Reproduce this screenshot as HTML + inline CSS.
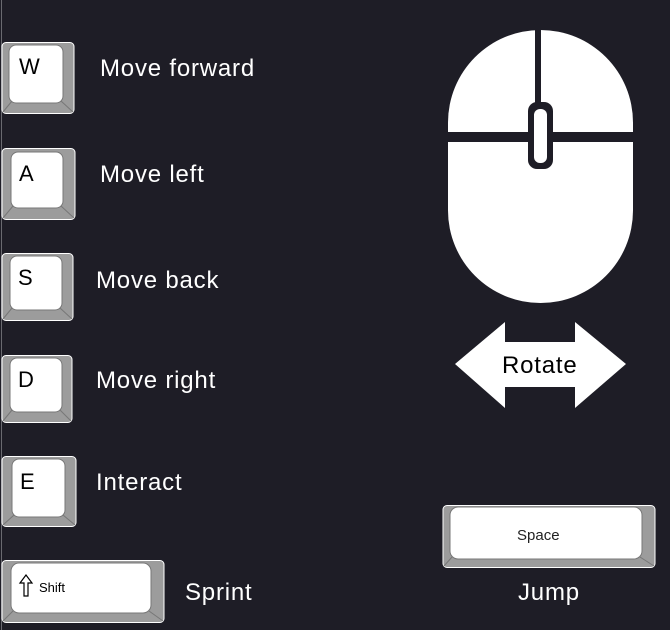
<!DOCTYPE html>
<html><head><style>
html,body{margin:0;padding:0;background:#1e1d26;width:670px;height:630px;overflow:hidden;position:relative;font-family:"Liberation Sans",sans-serif}
.t{position:absolute;color:#fff;font-size:24px;white-space:nowrap;letter-spacing:0.8px}
.k{position:absolute;color:#000;font-size:22px;white-space:nowrap}
.edge{position:absolute;left:1px;top:0;width:1px;height:630px;background:#6a6a70}
svg{position:absolute;left:0;top:0}
</style></head><body>
<div class="edge"></div>
<svg width="670" height="630" viewBox="0 0 670 630">
<g stroke-width="1">
<rect x="2" y="42.5" width="72" height="71" rx="4" fill="#9c9c9c" stroke="#fff"/>
<rect x="9" y="45" width="54" height="58" rx="7" fill="#fff" stroke="#777"/>
<path d="M3 112 L12 101 M73 112 L61 101" stroke="#777"/>
<rect x="2" y="148.5" width="73" height="71" rx="4" fill="#9c9c9c" stroke="#fff"/>
<rect x="11" y="152" width="52" height="56" rx="7" fill="#fff" stroke="#777"/>
<path d="M3 218 L13 206 M74 218 L61 206" stroke="#777"/>
<rect x="2" y="253.5" width="71" height="67" rx="4" fill="#9c9c9c" stroke="#fff"/>
<rect x="10" y="256" width="52" height="54" rx="7" fill="#fff" stroke="#777"/>
<path d="M3 319 L12 308 M72 319 L60 308" stroke="#777"/>
<rect x="2" y="355.5" width="70" height="67" rx="4" fill="#9c9c9c" stroke="#fff"/>
<rect x="10" y="358" width="52" height="54" rx="7" fill="#fff" stroke="#777"/>
<path d="M3 421 L12 410 M71 421 L60 410" stroke="#777"/>
<rect x="2" y="456.5" width="74" height="70" rx="4" fill="#9c9c9c" stroke="#fff"/>
<rect x="12" y="459" width="53" height="58" rx="7" fill="#fff" stroke="#777"/>
<path d="M3 525 L14 515 M75 525 L63 515" stroke="#777"/>
<rect x="2" y="560.5" width="162" height="62" rx="4" fill="#9c9c9c" stroke="#fff"/>
<rect x="11" y="563" width="140" height="50" rx="8" fill="#fff" stroke="#777"/>
<path d="M3 621 L13 611 M163 621 L149 611" stroke="#777"/>
<rect x="443" y="505.5" width="212" height="62" rx="4" fill="#9c9c9c" stroke="#fff"/>
<rect x="450" y="507" width="192" height="52" rx="8" fill="#fff" stroke="#777"/>
<path d="M444 566 L452 557 M654 566 L640 557" stroke="#777"/>
</g>
<rect x="448" y="30" width="185" height="273" rx="92.5" fill="#fff"/>
<rect x="535" y="30" width="6" height="74" fill="#1e1d26"/>
<rect x="448" y="132" width="185" height="10" fill="#1e1d26"/>
<rect x="528" y="102" width="25" height="67" rx="9" fill="#1e1d26"/>
<rect x="534" y="109" width="13" height="54" rx="6" fill="#fff"/>
<path d="M455 364 L505 322 L505 342 L575 342 L575 322 L626 364 L575 408 L575 387 L505 387 L505 408 Z" fill="#fff"/>
<path d="M26 575 L20 583 L24 583 L24 596 L28 596 L28 583 L32 583 Z" fill="none" stroke="#000" stroke-width="1.2"/>
</svg>
<div class="k" style="left:19px;top:54px">W</div>
<div class="k" style="left:19px;top:161px">A</div>
<div class="k" style="left:18px;top:265px">S</div>
<div class="k" style="left:18px;top:367px">D</div>
<div class="k" style="left:20px;top:469px">E</div>
<div class="k" style="left:39px;top:580px;font-size:13px">Shift</div>
<div class="k" style="left:517px;top:527px;color:#222;font-size:15px">Space</div>
<div class="t" style="left:100px;top:55px">Move forward</div>
<div class="t" style="left:100px;top:161px">Move left</div>
<div class="t" style="left:96px;top:267px">Move back</div>
<div class="t" style="left:96px;top:367px">Move right</div>
<div class="t" style="left:96px;top:469px">Interact</div>
<div class="t" style="left:185px;top:579px">Sprint</div>
<div class="t" style="left:518px;top:579px">Jump</div>
<div class="t" style="left:502px;top:352px;color:#000">Rotate</div>
</body></html>
